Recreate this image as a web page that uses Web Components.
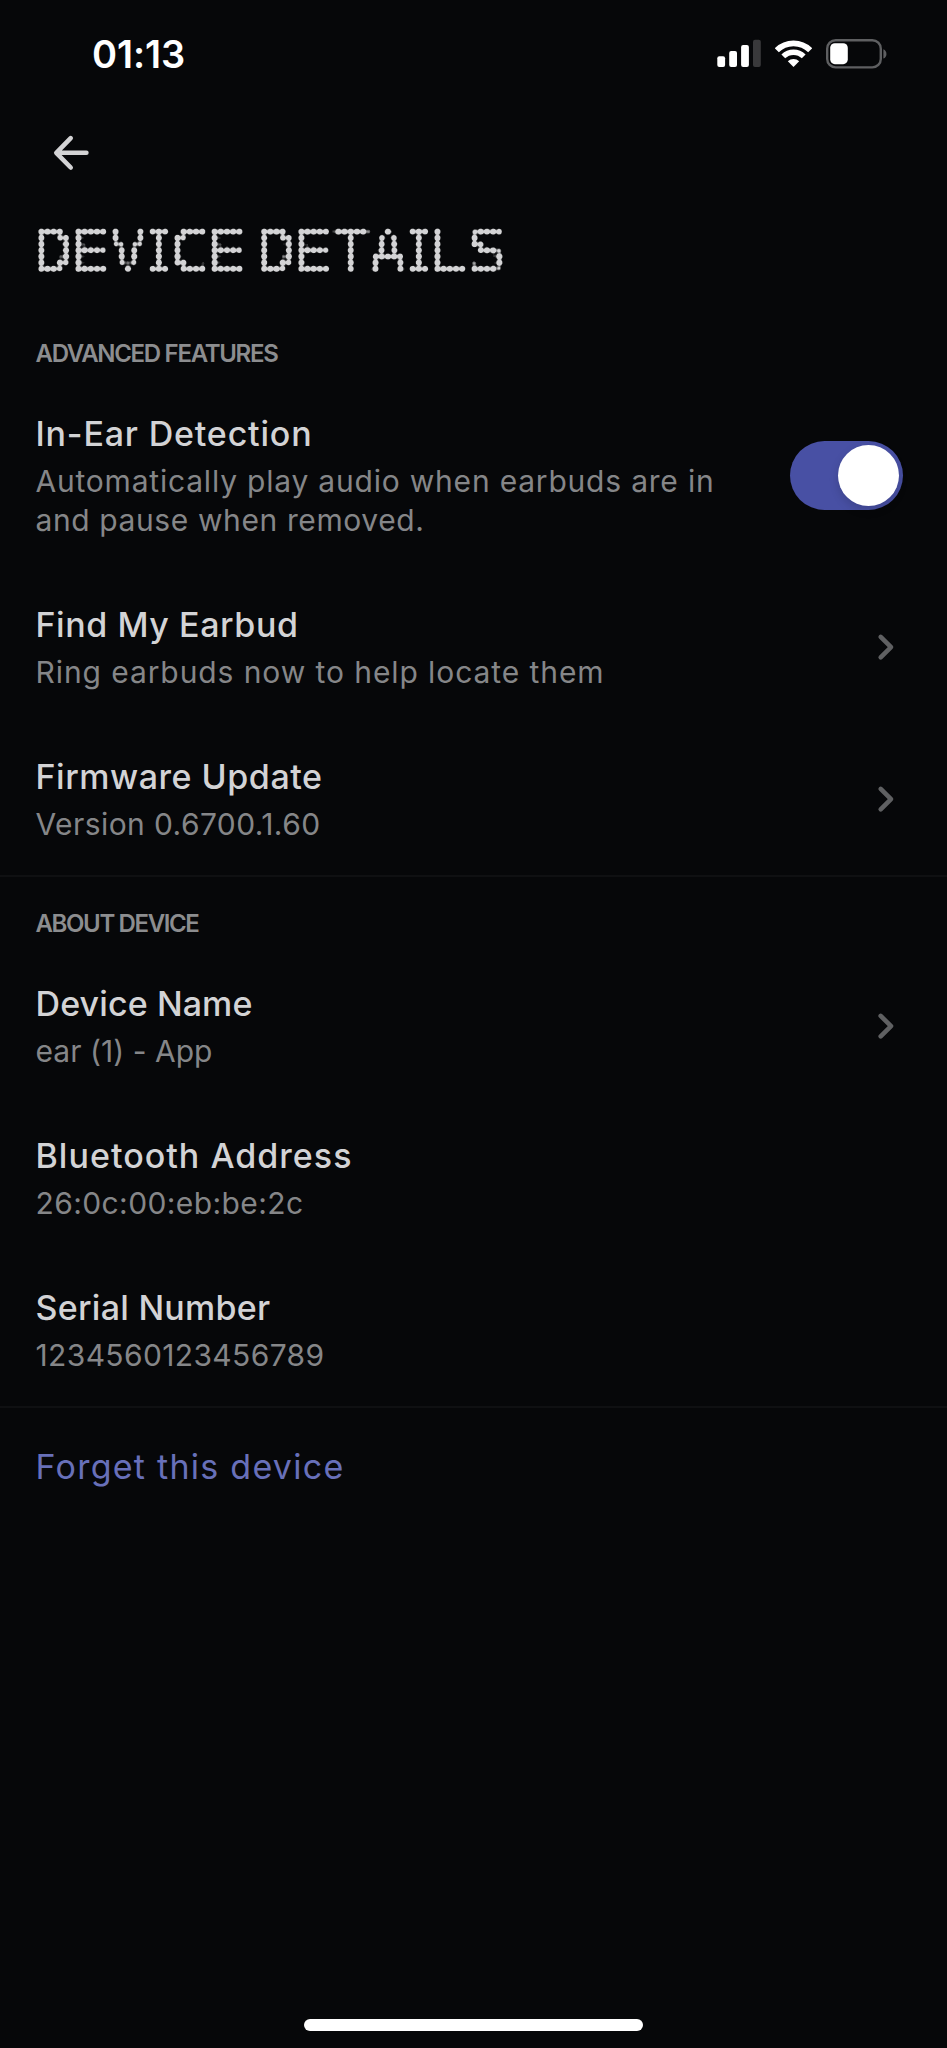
<!DOCTYPE html>
<html lang="en">
<head>
<meta charset="utf-8">
<title>Device details</title>
<style>
    html, body {
        margin: 0;
        background: #060709;
    }
    body {
        font-family: Inter, "Liberation Sans", sans-serif;
        color: #d3d3d5;
    }
</style>
</head>
<body>
<device-page>
    <status-bar slot="top"><fit-text width="93">01:13</fit-text></status-bar>
    <page-header slot="top"></page-header>

    <setting-section>
        <fit-text slot="heading" width="242">ADVANCED FEATURES</fit-text>
        <setting-row>
            <fit-text slot="title" width="277">In-Ear Detection</fit-text>
            <fit-text width="679">Automatically play audio when earbuds are in</fit-text>
            <fit-text width="389">and pause when removed.</fit-text>
            <toggle-switch slot="action"></toggle-switch>
        </setting-row>
        <setting-row>
            <fit-text slot="title" width="263">Find My Earbud</fit-text>
            <fit-text width="569">Ring earbuds now to help locate them</fit-text>
            <chevron-icon slot="action"></chevron-icon>
        </setting-row>
        <setting-row>
            <fit-text slot="title" width="287">Firmware Update</fit-text>
            <fit-text width="285">Version 0.6700.1.60</fit-text>
            <chevron-icon slot="action"></chevron-icon>
        </setting-row>
    </setting-section>

    <setting-section>
        <fit-text slot="heading" width="163">ABOUT DEVICE</fit-text>
        <setting-row>
            <fit-text slot="title" width="217">Device Name</fit-text>
            <fit-text width="177">ear (1) - App</fit-text>
            <chevron-icon slot="action"></chevron-icon>
        </setting-row>
        <setting-row>
            <fit-text slot="title" width="317">Bluetooth Address</fit-text>
            <fit-text width="268">26:0c:00:eb:be:2c</fit-text>
        </setting-row>
        <setting-row>
            <fit-text slot="title" width="235">Serial Number</fit-text>
            <fit-text width="289">1234560123456789</fit-text>
        </setting-row>
    </setting-section>

    <forget-link><fit-text width="309">Forget this device</fit-text></forget-link>
</device-page>

<script>
function define(name, html) {
    const template = document.createElement('template');
    template.innerHTML = html;
    window.customElements.define(name, class extends HTMLElement {
        constructor() {
            super();
            this.attachShadow({mode: 'open'}).appendChild(template.content.cloneNode(true));
        }
    });
}

define('device-page', `
<style>
    :host {
        display: flex;
        flex-direction: column;
        width: 947px;
        height: 2048px;
        overflow: hidden;
    }
    .home {
        width: 339px;
        height: 12px;
        margin: auto auto 17px 304px;
        border-radius: 6px;
        background: #fff;
    }
</style>
<slot name="top"></slot>
<slot></slot>
<div class="home"></div>
`);

define('status-bar', `
<style>
    :host {
        display: flex;
        align-items: center;
        justify-content: space-between;
        box-sizing: border-box;
        height: 107px;
        padding: 0 60px 0 92px;
        color: #fff;
        font-size: 38px;
        font-weight: 600;
    }
    .icons {
        display: flex;
        gap: 14px;
    }
    svg { display: block; }
</style>
<slot></slot>
<div class="icons">
    <svg width="44" height="30" fill="#fff">
        <rect x="0.3" y="17.3" width="7.8" height="10.7" rx="2"/>
        <rect x="12.2" y="12" width="7.8" height="16" rx="2"/>
        <rect x="24.1" y="6" width="7.8" height="22" rx="2"/>
        <rect x="36" y="0.7" width="7.8" height="27.3" rx="2" fill="#39393b"/>
    </svg>
    <svg width="37" height="30" fill="none" stroke="#fff">
        <path d="M1.8 11.2A23.6 23.6 0 0 1 35.2 11.2" stroke-width="5.8"/>
        <path d="M8.3 17.4A14.5 14.5 0 0 1 28.7 17.4" stroke-width="5.4"/>
        <path d="M18.5 28l-5.7-5.7a8.2 8.2 0 0 1 11.4 0z" fill="#fff" stroke="none"/>
    </svg>
    <svg width="61" height="30" fill="none">
        <rect x="1.2" y="1.2" width="53.6" height="27.2" rx="8.5" stroke="#5e5f61" stroke-width="2.4"/>
        <rect x="4.2" y="4.2" width="17.6" height="21" rx="4.6" fill="#fff"/>
        <path d="M57.4 10.2c4.1 1.7 4.1 7.7 0 9.4z" fill="#5e5f61"/>
    </svg>
</div>
`);

// The heading is text sampled on a 6.19px grid; the filter swells each
// sample into a round dot.
define('page-header', `
<style>
    :host { display: block; }
    .nav {
        display: flex;
        align-items: center;
        height: 91px;
        padding-left: 52px;
    }
    svg { display: block; }
    text {
        font-family: "DejaVu Sans Mono", monospace;
        font-size: 58px;
        stroke: #d3d3d5;
        stroke-width: 1.4;
    }
    .wide { stroke: none; }
    .i {
        font-family: "DejaVu Serif Condensed", "DejaVu Serif", serif;
        font-stretch: condensed;
    }
</style>
<div class="nav">
    <svg width="38" height="38" fill="none" stroke="#d3d3d5" stroke-width="4.6" stroke-linecap="round" stroke-linejoin="round">
        <path d="M18.7 4.1L4.3 18.8L18.7 33.5M4.8 18.8H34.4"/>
    </svg>
</div>
<svg width="947" height="109" fill="#d3d3d5">
    <defs>
        <pattern id="dots" x="38.2" y="30.6" width="6.19" height="6.19" patternUnits="userSpaceOnUse">
            <circle cx="3.095" cy="3.095" r="1.2" fill="#fff"/>
        </pattern>
        <mask id="grid" maskUnits="userSpaceOnUse" x="0" y="0" width="947" height="109">
            <rect x="38.2" y="30.6" width="464.3" height="43.33" fill="url(#dots)"/>
        </mask>
        <filter id="swell" filterUnits="userSpaceOnUse" x="0" y="0" width="947" height="109" color-interpolation-filters="sRGB">
            <feGaussianBlur stdDeviation="1.6"/>
            <feComponentTransfer result="shape">
                <feFuncA type="linear" slope="18" intercept="-0.42"/>
            </feComponentTransfer>
            <feFlood flood-color="#d3d3d5"/>
            <feComposite in2="shape" operator="in"/>
        </filter>
    </defs>
    <g filter="url(#swell)">
        <g mask="url(#grid)">
            <text transform="scale(1.1 1)" y="73.3" x="31.1 63.9 98.9 134.1 154.5 187.7 216 233.6 266.4 301.6 335.3 370.6 389.3 425.3">DE<tspan class="wide">V</tspan><tspan class="i">I</tspan>CE DE<tspan class="wide">TA</tspan><tspan class="i">I</tspan>LS</text>
        </g>
    </g>
</svg>
`);

define('setting-section', `
<style>
    :host {
        display: block;
        border-bottom: 2px solid #0f1012;
    }
    .heading {
        padding: 32px 35.5px 11px;
        font-size: 24px;
        font-weight: 600;
        line-height: 30px;
        color: #8c8d8f;
    }
</style>
<div class="heading"><slot name="heading"></slot></div>
<slot></slot>
`);

define('setting-row', `
<style>
    :host {
        display: flex;
        align-items: center;
        justify-content: space-between;
        padding: 31px 44px 31px 35.5px;
    }
    .title {
        margin-bottom: 5px;
        font-size: 34px;
        font-weight: 500;
        line-height: 46px;
    }
    .text {
        display: flex;
        flex-direction: column;
        align-items: flex-start;
        font-size: 30px;
        line-height: 39px;
        color: #858688;
    }
</style>
<div>
    <div class="title"><slot name="title"></slot></div>
    <div class="text"><slot></slot></div>
</div>
<slot name="action"></slot>
`);

define('toggle-switch', `
<style>
    :host {
        display: flex;
        align-items: center;
        justify-content: flex-end;
        box-sizing: border-box;
        width: 113px;
        height: 69px;
        padding: 4px;
        border-radius: 35px;
        background: #4850a4;
    }
    .knob {
        width: 61px;
        height: 61px;
        border-radius: 50%;
        background: #fff;
        box-shadow: 0 4px 10px rgba(0, 0, 0, 0.15);
    }
</style>
<div class="knob"></div>
`);

define('chevron-icon', `
<style>
    :host {
        display: block;
        margin-right: 8px;
    }
    svg { display: block; }
</style>
<svg width="19" height="30" fill="none" stroke="#5f6062" stroke-width="4.6" stroke-linecap="round" stroke-linejoin="round">
    <path d="M4.7 4.9L15 15.1L4.7 25.3"/>
</svg>
`);

define('forget-link', `
<style>
    :host {
        display: block;
        padding: 36px 35.5px 0;
        font-size: 34px;
        line-height: 46px;
        color: #6870b9;
    }
</style>
<slot></slot>
`);

// One line of text, tracked in or out to the width given. Defined last,
// so that it measures itself in its final font.
class FitText extends HTMLElement {
    constructor() {
        super();
        this.attachShadow({mode: 'open'}).innerHTML = `
<style>
    :host {
        display: inline-block;
        vertical-align: top;
        white-space: nowrap;
    }
</style>
<slot></slot>`;
    }

    connectedCallback() {
        const natural = this.getBoundingClientRect().width;
        const spacing = (this.getAttribute('width') - natural) / this.textContent.length;
        this.style.letterSpacing = spacing.toFixed(3) + 'px';
    }
}

window.customElements.define('fit-text', FitText);
</script>
</body>
</html>
